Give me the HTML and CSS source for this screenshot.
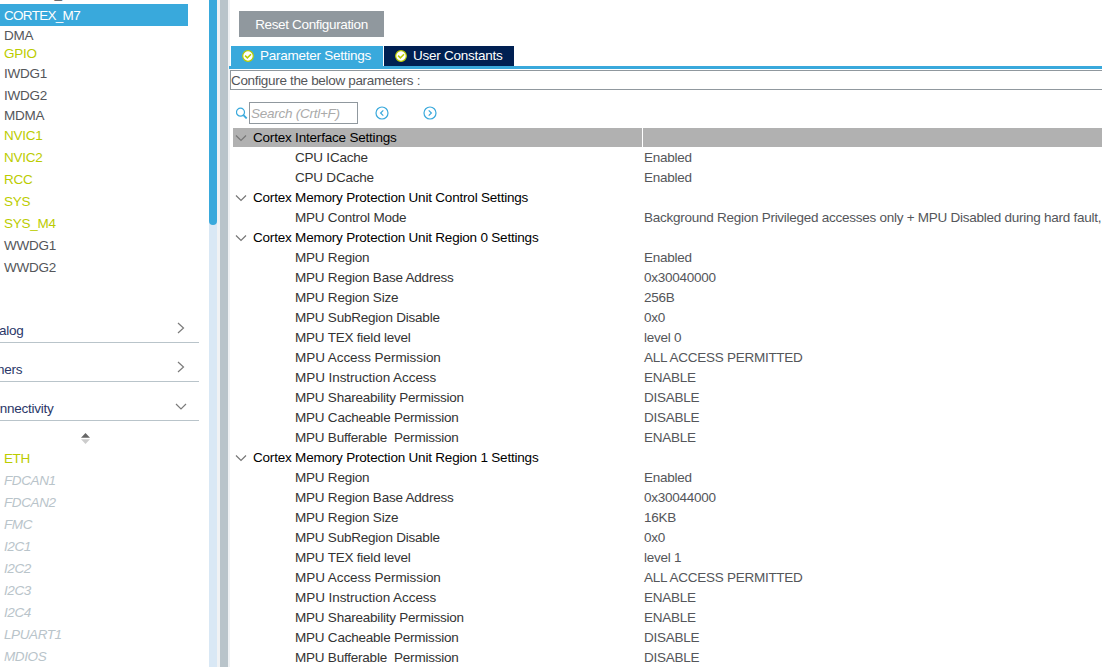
FILE: index.html
```html
<!DOCTYPE html>
<html lang="en">
<head>
<meta charset="utf-8">
<title>Cortex_M7 Configuration</title>
<link rel="stylesheet" href="styles.css">
</head>
<body>
<div class="app">
  <aside class="sidebar">
    <ul class="core">
      <li class="scrolled">CORTEX_M4</li>
      <li class="selected">CORTEX_M7</li>
      <li class="short">DMA</li>
      <li class="short on">GPIO</li>
      <li>IWDG1</li>
      <li>IWDG2</li>
      <li class="short">MDMA</li>
      <li class="on">NVIC1</li>
      <li class="on">NVIC2</li>
      <li class="on">RCC</li>
      <li class="on">SYS</li>
      <li class="on">SYS_M4</li>
      <li>WWDG1</li>
      <li>WWDG2</li>
    </ul>
    <div class="sections">
      <div class="section"><span>Analog</span><svg width="12" height="12" viewBox="0 0 12 12"><path d="M3 1l5.500 5L3 11"/></svg></div>
      <div class="section"><span>Timers</span><svg width="12" height="12" viewBox="0 0 12 12"><path d="M3 1l5.500 5L3 11"/></svg></div>
      <div class="section"><span>Connectivity</span><svg width="12" height="12" viewBox="0 0 12 12"><path d="M1 4l5 5 5-5"/></svg></div>
    </div>
    <div class="sort"><svg width="9" height="11" viewBox="0 0 9 11"><path d="M0 4.800 4.500 0 9 4.800z" fill="#666"/><path d="M0 6.200h9L4.500 11z" fill="#ccc"/></svg></div>
    <ul class="connectivity">
      <li class="on">ETH</li>
      <li>FDCAN1</li>
      <li>FDCAN2</li>
      <li>FMC</li>
      <li>I2C1</li>
      <li>I2C2</li>
      <li>I2C3</li>
      <li>I2C4</li>
      <li>LPUART1</li>
      <li>MDIOS</li>
    </ul>
  </aside>
  <div class="scrollbar"><div class="thumb"></div></div>
  <div class="splitter"></div>
  <main class="main">
    <button class="reset">Reset Configuration</button>
    <nav class="tabs">
      <div class="tab active"><svg class="check" width="12" height="12" viewBox="0 0 12 12"><circle cx="6" cy="6" r="5.300"/><path d="M3.100 5.600l2.300 2.300 3.600-3.600"/></svg>Parameter Settings</div>
      <div class="tab"><svg class="check" width="12" height="12" viewBox="0 0 12 12"><circle cx="6" cy="6" r="5.300"/><path d="M3.100 5.600l2.300 2.300 3.600-3.600"/></svg>User Constants</div>
    </nav>
    <div class="hint">Configure the below parameters :</div>
    <div class="search">
      <svg width="12" height="12" viewBox="0 0 12 12"><circle cx="4.500" cy="5.200" r="4"/><path d="M7.400 8.200l3.300 3.300" stroke-width="1.800"/></svg>
      <div class="field">Search (Crtl+F)</div>
      <svg class="prev" width="14" height="14" viewBox="0 0 14 14"><circle cx="7" cy="7" r="6"/><path d="M8.300 4.300 5.600 7l2.700 2.700"/></svg>
      <svg class="next" width="14" height="14" viewBox="0 0 14 14"><circle cx="7" cy="7" r="6"/><path d="M5.700 4.300 8.400 7 5.700 9.700"/></svg>
    </div>
    <div class="grid" id="grid"></div>
  </main>
</div>
<script src="app.js"></script>
</body>
</html>
```

FILE: styles.css
```css
* { box-sizing: border-box; }
body {
  margin: 0;
  background: #fff;
  color: #54565a;
  font: 13.5px/20px "Liberation Sans", Arial, sans-serif;
  letter-spacing: -.26px;
  overflow: hidden;
}
ul { list-style: none; margin: 0; padding: 0; }
svg { display: block; flex: none; fill: none; }
.app { display: flex; width: 1102px; height: 667px; overflow: hidden; }

.sidebar { width: 209px; flex: none; overflow: hidden; }
.sidebar li { height: 22px; line-height: 23px; padding-left: 4px; white-space: pre; }
.core { margin-top: -18px; height: 296px; }
.core .short { height: 18px; line-height: 19px; }
.core .scrolled { padding-left: 0; }
.core .selected { width: 188px; background: #39a9dc; color: #fff; letter-spacing: -.7px; }
.sidebar .on { color: #bbcc00; }
.sections { margin: 26px 10px 0 -17px; }
.section {
  display: flex;
  justify-content: space-between;
  height: 39px;
  padding: 16px 12px 0 0;
  border-bottom: 1px solid #b9c4ca;
  color: #2a3768;
}
.section span { line-height: 22px; }
.section svg { margin-top: 2px; stroke: #7b7b7b; stroke-width: 1.2; }
.sort { padding: 12px 0 3px 81px; }
.connectivity li { color: #b9c4ca; font-style: italic; letter-spacing: -.4px; }
.connectivity .on { font-style: normal; }

.scrollbar { width: 8px; flex: none; background: #d9e8f5; }
.thumb { height: 225px; background: #39a9dc; border-radius: 0 0 4px 4px; }
.splitter {
  width: 13px;
  flex: none;
  background: #b9c4ca;
  border: solid #f0f2f4;
  border-width: 0 2px 0 3px;
}

.main { flex: 1; min-width: 0; padding-top: 11px; margin-left: -1px; }
.reset {
  display: block;
  width: 145px;
  height: 26px;
  margin-left: 10px;
  padding: 1px 0 0;
  border: 0;
  background: #90989e;
  color: #fff;
  font: inherit;
  letter-spacing: -.35px;
}
.tabs {
  display: flex;
  gap: 1px;
  margin-top: 9px;
  padding-left: 2px;
  border-bottom: 3px solid #39a9dc;
}
.tab {
  display: flex;
  align-items: center;
  gap: 6px;
  width: 130px;
  height: 20px;
  padding-left: 11px;
  background: #002052;
  color: #fff;
  white-space: nowrap;
}
.tab.active { width: 152px; background: #39a9dc; }
.check { margin-top: -1px; }
.check circle { fill: #fff; stroke: #bbcc00; stroke-width: 1.200; }
.check path { stroke: #bbcc00; stroke-width: 1.500; }
.hint {
  height: 20px;
  margin: 1px -2px 0 1px;
  border: 1px solid #90989e;
  line-height: 19px;
  letter-spacing: -.33px;
}
.search { display: flex; align-items: center; height: 22px; margin: 12px 0 4px 7px; }
.search svg { stroke: #39a9dc; stroke-width: 1.200; }
.field {
  width: 109px;
  height: 22px;
  margin-left: 1px;
  padding-left: 1px;
  border: 1px solid #90989e;
  color: #aaa;
  font-style: italic;
  line-height: 21px;
}
.prev { margin-left: 17px; }
.next { margin-left: 34px; }

.grid { margin-left: 4px; }
.row { display: grid; grid-template-columns: 409px 1fr; gap: 1px; height: 20px; line-height: 19px; white-space: pre; }
.row .name { padding-left: 62px; color: #333; letter-spacing: -.22px; }
.row .value { padding-left: 1px; overflow: hidden; }
.row .wide { letter-spacing: -.06px; }
.row.group .name { display: flex; align-items: center; gap: 6px; height: 19px; padding-left: 2px; color: #000; letter-spacing: -.2px; }
.row.group svg { stroke: #777; stroke-width: 1.200; }
.row.current > * { height: 19px; background: #b1b1b1; }
```

FILE: app.js
```js
const region = (n, address, size, level, share, cache, buffer) => [
  ["Cortex Memory Protection Unit Region " + n + " Settings"],
  ["MPU Region", "Enabled"],
  ["MPU Region Base Address", address],
  ["MPU Region Size", size],
  ["MPU SubRegion Disable", "0x0"],
  ["MPU TEX field level", level],
  ["MPU Access Permission", "ALL ACCESS PERMITTED"],
  ["MPU Instruction Access", "ENABLE"],
  ["MPU Shareability Permission", share],
  ["MPU Cacheable Permission", cache],
  ["MPU Bufferable  Permission", buffer]
];
const rows = [
  ["Cortex Interface Settings"],
  ["CPU ICache", "Enabled"],
  ["CPU DCache", "Enabled"],
  ["Cortex Memory Protection Unit Control Settings"],
  ["MPU Control Mode", "Background Region Privileged accesses only + MPU Disabled during hard fault,"],
  ...region(0, "0x30040000", "256B", "level 0", "DISABLE", "DISABLE", "ENABLE"),
  ...region(1, "0x30044000", "16KB", "level 1", "ENABLE", "DISABLE", "DISABLE")
];
const wide = ["MPU Access Permission", "MPU Instruction Access"];
const chevron = '<svg width="12" height="12" viewBox="0 0 12 12"><path d="M1 3.5l5 5 5-5"/></svg>';
document.getElementById("grid").innerHTML = rows.map(([name, value], i) => {
  const group = value === undefined;
  const cls = "row" + (group ? " group" : "") + (i === 0 ? " current" : "");
  const nameCls = "name" + (wide.includes(name) ? " wide" : "");
  return `<div class="${cls}"><div class="${nameCls}">${group ? chevron : ""}<span>${name}</span></div><div class="value">${value || ""}</div></div>`;
}).join("");
```
